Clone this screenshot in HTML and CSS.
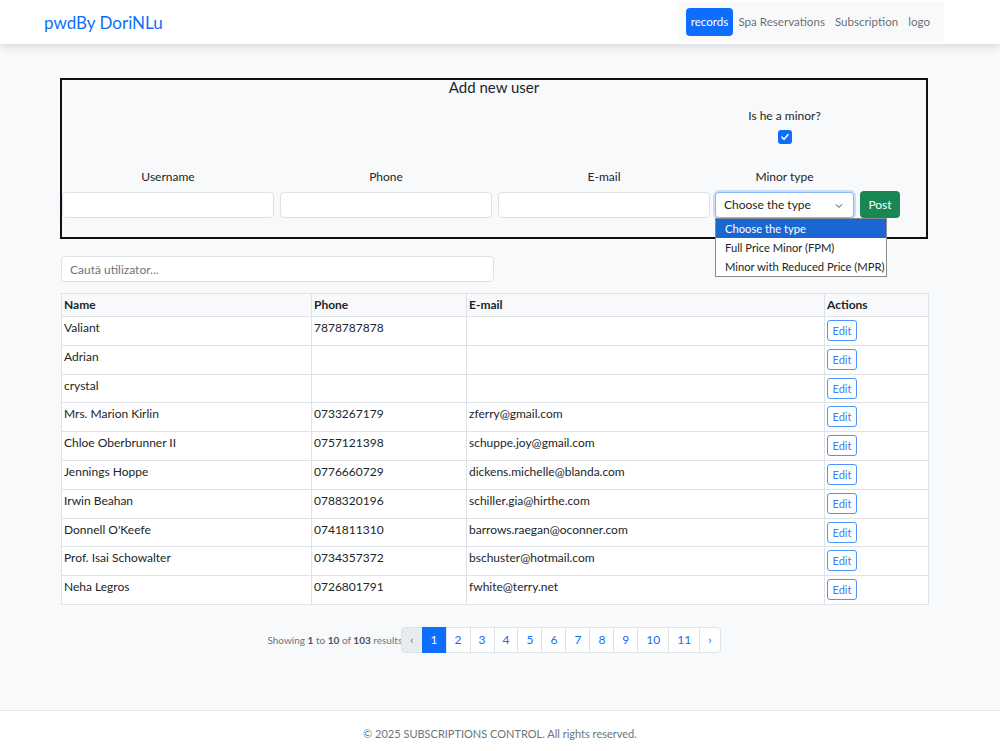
FILE: index.html
```
<!DOCTYPE html>
<html lang="en">
<head>
	<meta charset="UTF-8">
	<title>Subscriptions Control</title>
	<link rel="stylesheet" href="styles.css">
</head>
<body>
<header class="topbar">
	<a class="brand" href="#">pwdBy DoriNLu</a>
	<nav class="nav">
		<a class="nav-link active" href="#">records</a>
		<a class="nav-link" href="#">Spa Reservations</a>
		<a class="nav-link" href="#">Subscription</a>
		<a class="nav-link" href="#">logo</a>
	</nav>
</header>

<main class="page">
	<div class="add-box">
		<h2 class="add-title">Add new user</h2>
		<div class="add-row">
			<div class="field">
				<label>Username</label>
				<input class="text-input" type="text">
			</div>
			<div class="field">
				<label>Phone</label>
				<input class="text-input" type="text">
			</div>
			<div class="field">
				<label>E-mail</label>
				<input class="text-input" type="text">
			</div>
			<div class="field minor">
				<label>Is he a minor?</label>
				<span class="check"><svg width="10" height="10" viewBox="0 0 10 10"><path d="M2 5.2l2 2.1 4-4.6" fill="none" stroke="#fff" stroke-width="1.6" stroke-linecap="round" stroke-linejoin="round"/></svg></span>
				<label class="minor-label">Minor type</label>
				<div class="select-wrap">
					<div class="select">Choose the type
						<svg class="chev" width="10" height="10" viewBox="0 0 10 10"><path d="M2.2 3.6l2.8 2.8 2.8-2.8" fill="none" stroke="#444" stroke-width="1" stroke-linecap="round" stroke-linejoin="round"/></svg>
					</div>
					<div class="dropdown">
						<div class="opt selected">Choose the type</div>
						<div class="opt">Full Price Minor (FPM)</div>
						<div class="opt">Minor with Reduced Price (MPR)</div>
					</div>
				</div>
			</div>
			<button class="post">Post</button>
		</div>
	</div>

	<input class="search" type="text" placeholder="Caută utilizator...">

	<table class="users">
		<colgroup>
			<col style="width:250px"><col style="width:155px"><col style="width:358px"><col>
		</colgroup>
		<thead>
			<tr><th>Name</th><th>Phone</th><th>E-mail</th><th>Actions</th></tr>
		</thead>
		<tbody>
			<tr><td>Valiant</td><td>7878787878</td><td></td><td><button class="edit">Edit</button></td></tr>
			<tr><td>Adrian</td><td></td><td></td><td><button class="edit">Edit</button></td></tr>
			<tr><td>crystal</td><td></td><td></td><td><button class="edit">Edit</button></td></tr>
			<tr><td>Mrs. Marion Kirlin</td><td>0733267179</td><td>zferry@gmail.com</td><td><button class="edit">Edit</button></td></tr>
			<tr><td>Chloe Oberbrunner II</td><td>0757121398</td><td>schuppe.joy@gmail.com</td><td><button class="edit">Edit</button></td></tr>
			<tr><td>Jennings Hoppe</td><td>0776660729</td><td>dickens.michelle@blanda.com</td><td><button class="edit">Edit</button></td></tr>
			<tr><td>Irwin Beahan</td><td>0788320196</td><td>schiller.gia@hirthe.com</td><td><button class="edit">Edit</button></td></tr>
			<tr><td>Donnell O'Keefe</td><td>0741811310</td><td>barrows.raegan@oconner.com</td><td><button class="edit">Edit</button></td></tr>
			<tr><td>Prof. Isai Schowalter</td><td>0734357372</td><td>bschuster@hotmail.com</td><td><button class="edit">Edit</button></td></tr>
			<tr><td>Neha Legros</td><td>0726801791</td><td>fwhite@terry.net</td><td><button class="edit">Edit</button></td></tr>
		</tbody>
	</table>

	<div class="pager">
		<span class="showing">Showing <b>1</b> to <b>10</b> of <b>103</b> results</span>
		<ul class="pagination">
			<li class="pg disabled">‹</li>
			<li class="pg current">1</li>
			<li class="pg">2</li>
			<li class="pg">3</li>
			<li class="pg">4</li>
			<li class="pg">5</li>
			<li class="pg">6</li>
			<li class="pg">7</li>
			<li class="pg">8</li>
			<li class="pg">9</li>
			<li class="pg">10</li>
			<li class="pg">11</li>
			<li class="pg">›</li>
		</ul>
	</div>
</main>

<footer class="footer">© 2025 SUBSCRIPTIONS CONTROL. All rights reserved.</footer>
</body>
</html>
```

FILE: styles.css
```
*{
	margin: 0;
	padding: 0;
	box-sizing: border-box;
}
body{font-family:Lato, "Noto Sans", "Liberation Sans", sans-serif; font-size:12px; color:#212529; background:#f8f9fa;}
a{text-decoration:none;}

.topbar{height:44px; background:#fff; display:flex; align-items:center; justify-content:space-between; padding:0 56px 0 44px; box-shadow:0 2px 10px rgba(0,0,0,.15); position:relative;}
.brand{font-size:17px; color:#0d6efd;}
.nav{display:flex; align-items:center; height:40px; background:#f8f9fa; padding:0 9px 0 8px;}
.nav-link{font-size:11.6px; color:rgba(0,0,0,.6); padding:0 5px; line-height:28px; border-radius:4px;}
.nav-link.active{background:#0d6efd; color:#fff;}

.page{padding:34px 72px 57px 60px;}

.add-box{border:2px solid #111; height:161px;}
.add-title{font-size:15px; font-weight:normal; text-align:center; line-height:14px;}
.add-row{display:flex; align-items:flex-end; gap:6px; margin-top:13px;}
.field{width:212px; display:flex; flex-direction:column; align-items:center;}
.field label{line-height:18px; margin-bottom:6px;}
.text-input{width:100%; height:26px; border:1px solid #dee2e6; border-radius:4px; background:#fff;}
.field.minor{width:139px; margin-left:-1px;}
.field.minor label{margin-bottom:0;}
.check{width:14px; height:14px; background:#0d6efd; border-radius:3px; display:flex; align-items:center; justify-content:center; margin:5px 0 24px;}
.field.minor .minor-label{margin-bottom:6px;}
.select-wrap{width:100%; position:relative;}
.select{height:26px; border:1px solid #86b7fe; box-shadow:0 0 0 2px rgba(13,110,253,.2); border-radius:4px; background:#fff; line-height:24px; padding-left:8px; font-size:12px; position:relative;}
.chev{position:absolute; right:9px; top:8px;}
.dropdown{position:absolute; left:0; top:26px; width:172px; background:#fff; border:1px solid #8a8a8a; z-index:5;}
.opt{line-height:19px; padding-left:9px; font-size:11.2px; white-space:nowrap;}
.opt.selected{background:#1a66d2; color:#fff;}
.post{width:40px; height:27px; border:0; border-radius:4px; background:#198754; color:#fff; font-family:inherit; font-size:12px;}

.search{display:block; width:433px; height:26px; margin:17px 0 11px 1px; border:1px solid #dee2e6; border-radius:4px; background:#fff; padding-left:8px; font-family:inherit; font-size:12px;}
.search::placeholder{color:#6c757d;}

.users{width:868px; margin-left:1px; border-collapse:collapse; table-layout:fixed; background:#fff;}
.users th, .users td{border:1px solid #dee2e6; padding:3px 2px; text-align:left; vertical-align:top;}
.users th{background:#f8f9fa; line-height:16px; font-weight:bold;}
.users td{line-height:15px; height:28.8px;}
.edit{width:30px; height:21px; border:1px solid #4d94fd; border-radius:3px; background:#fff; color:#3b82f6; font-family:inherit; font-size:11px;}

.pager{display:flex; justify-content:center; align-items:center; margin-top:22px;}
.showing{font-size:10px; color:#6c757d;}
.showing b{color:#495057;}
.pagination{display:flex; list-style:none;}
.pg{height:26px; line-height:24px; padding:0 8px; border:1px solid #dee2e6; margin-left:-1px; background:#fff; color:#0d6efd; font-size:12px; text-align:center;}
.pg:first-child{border-radius:4px 0 0 4px;}
.pg:last-child{border-radius:0 4px 4px 0;}
.pg.disabled{background:#e9ecef; color:#6c757d;}
.pg.current{background:#0d6efd; border-color:#0d6efd; color:#fff;}

.footer{background:#fff; border-top:1px solid #e5e7eb; height:44px; line-height:45px; text-align:center; font-size:11px; color:#6c757d;}
```
